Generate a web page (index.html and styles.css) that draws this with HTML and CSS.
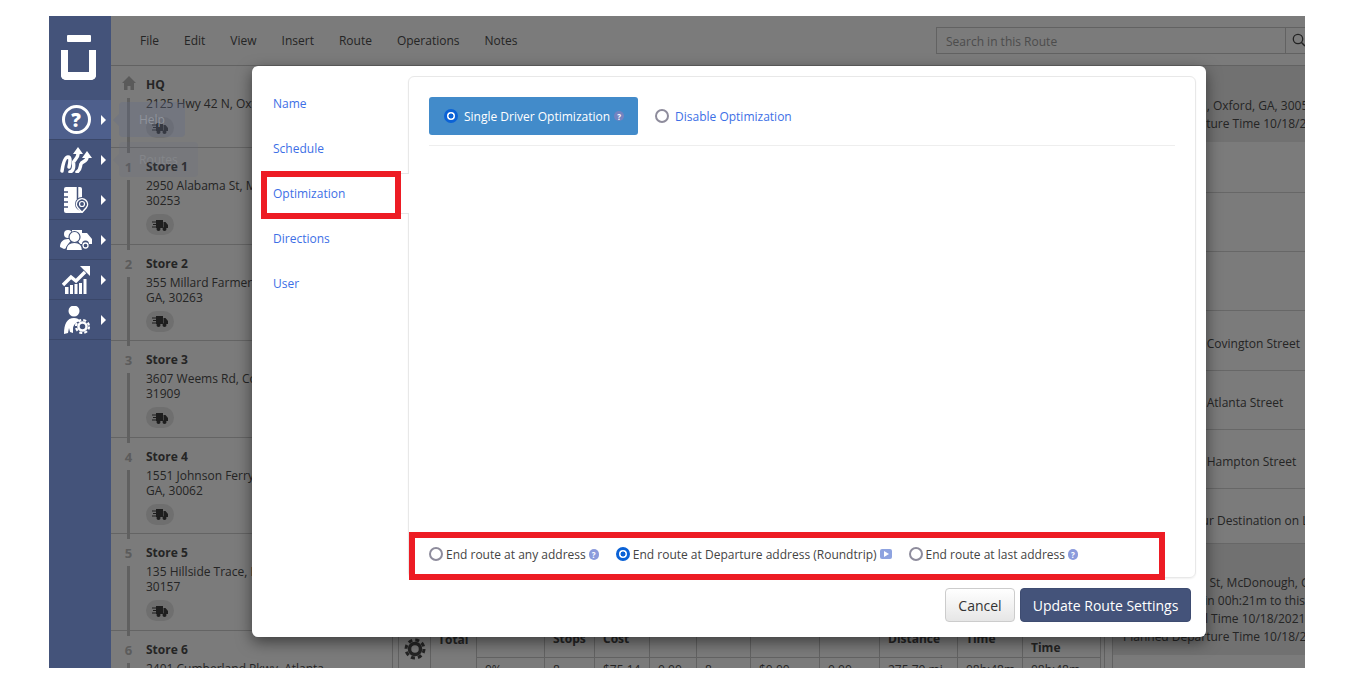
FILE: index.html
```html
<!DOCTYPE html>
<html lang="en">
<head>
    <meta charset="UTF-8">
    <title>Route Settings</title>
    <link rel="stylesheet" href="styles.css">
</head>
<body>

<div class="app">
    <nav class="sidebar">
        <div class="logo">
            <span class="logo-bar"></span>
            <span class="logo-cup"></span>
        </div>
        <a class="side-item active">
            <span class="side-icon"><span class="help-ring">?</span></span>
            <span class="side-arrow"></span>
        </a>
        <a class="side-item">
            <span class="side-icon">
                <svg width="32" height="26" viewBox="0 0 32 26">
                    <g fill="none" stroke="#fff" stroke-width="3.500" stroke-linecap="round">
                        <path d="M2 24C3 17 5 10 8 10c3 0 2 6 1 10"/>
                        <path d="M10 25c3-1 4-5 3.500-9-.3-3 4.500-4 4.500-9"/>
                        <path d="M17 25c4-2 3-6 4-8 1-3 6-2 6-7"/>
                    </g>
                    <path fill="#fff" d="M18 0l5 7H13zM27 4l5 7H22z"/>
                </svg>
            </span>
            <span class="side-arrow"></span>
        </a>
        <a class="side-item">
            <span class="side-icon">
                <svg width="28" height="26" viewBox="0 0 28 26">
                    <path fill="#fff" d="M4 0h14a2 2 0 0 1 2 2v22a2 2 0 0 1-2 2H4a2 2 0 0 1-2-2V2a2 2 0 0 1 2-2z"/>
                    <path fill="none" stroke="#44537a" stroke-width="1.500" d="M1 5h5M1 10h5M1 15h5M1 20h5M15.500 0v12"/>
                    <circle cx="20" cy="17" r="7" fill="#44537a"/>
                    <path fill="none" stroke="#fff" stroke-width="1.500" d="M20 25.500l-4.200-4.700a5.500 5.500 0 1 1 8.400 0z"/>
                    <circle cx="20" cy="17" r="2.500" fill="none" stroke="#fff" stroke-width="1.200"/>
                </svg>
            </span>
            <span class="side-arrow"></span>
        </a>
        <a class="side-item">
            <span class="side-icon">
                <svg width="34" height="22" viewBox="0 0 34 22">
                    <path fill="#fff" d="M13 1h10v3h5l5 6v5h-3a3.500 3.500 0 0 0-7 0h-2l-4-6-4-2z"/>
                    <circle cx="26.500" cy="16.500" r="2.500" fill="none" stroke="#fff" stroke-width="1.300"/>
                    <circle cx="9" cy="5" r="4" fill="#fff"/>
                    <path fill="#fff" d="M1 18c0-5 3-8 8-8 2 0 3 .5 4 1-3 2-5 5-5 8l-3 1z"/>
                    <circle cx="15.500" cy="8" r="5.500" fill="#fff" stroke="#44537a" stroke-width="1.200"/>
                    <path fill="#fff" stroke="#44537a" stroke-width="1.200" d="M7 21.500c0-5 3.500-8 8.500-8s8 3 8 8z"/>
                </svg>
            </span>
            <span class="side-arrow"></span>
        </a>
        <a class="side-item">
            <span class="side-icon">
                <svg width="28" height="28" viewBox="0 0 28 28">
                    <path fill="#fff" d="M8 19h3v9H8zM12.500 18h3v10h-3zM17 17h3v11h-3zM21.500 13h3v15h-3zM3 21h3.500v7H3z"/>
                    <path fill="none" stroke="#fff" stroke-width="3.500" d="M1 19l8-8 5 4 9-9"/>
                    <path fill="#fff" d="M18 0h10v10z"/>
                </svg>
            </span>
            <span class="side-arrow"></span>
        </a>
        <a class="side-item">
            <span class="side-icon">
                <svg width="28" height="28" viewBox="0 0 28 28">
                    <circle cx="12" cy="5" r="5.500" fill="#fff"/>
                    <path fill="#fff" d="M2 28c0-10 3-16 10-16 3 0 5 1 6 3-4 1-7 4-7 8v4l-3-1-1-4-1 5z"/>
                    <circle cx="20.500" cy="20.500" r="4" fill="none" stroke="#fff" stroke-width="2.500"/>
                    <circle cx="20.500" cy="20.500" r="6.500" fill="none" stroke="#fff" stroke-width="2.200" stroke-dasharray="3 2.100"/>
                </svg>
            </span>
            <span class="side-arrow"></span>
        </a>
    </nav>

    <div class="main">
        <header class="topbar">
            <div class="menu">
                <a>File</a>
                <a>Edit</a>
                <a>View</a>
                <a>Insert</a>
                <a>Route</a>
                <a>Operations</a>
                <a>Notes</a>
            </div>
            <div class="search">
                <span class="search-input">Search in this Route</span>
                <span class="search-btn">
                    <svg width="14" height="14" viewBox="0 0 14 14">
                        <circle cx="6" cy="6" r="4.700" fill="none" stroke="#444" stroke-width="1.300"/>
                        <path d="M9.500 9.500L13 13" stroke="#444" stroke-width="1.500"/>
                    </svg>
                </span>
            </div>
        </header>

        <div class="workspace">
            <section class="stops">
                <div class="stop">
                    <span class="stop-mark">
                        <svg width="14" height="14" viewBox="0 0 14 14"><path fill="#b4b4b4" d="M7 0l7 7h-2v7H8.500v-4h-3v4H2V7H0z"/></svg>
                    </span>
                    <h4>HQ</h4>
                    <p>2125 Hwy 42 N, Oxford, GA, 30054</p>
                    <span class="truck-pill"><svg class="truck" viewBox="0 0 16 12"><use href="#truck"/></svg></span>
                </div>
                <div class="stop">
                    <span class="stop-mark">1</span>
                    <h4>Store 1</h4>
                    <p>2950 Alabama St, McDonough, GA,<br>30253</p>
                    <span class="truck-pill"><svg class="truck" viewBox="0 0 16 12"><use href="#truck"/></svg></span>
                </div>
                <div class="stop">
                    <span class="stop-mark">2</span>
                    <h4>Store 2</h4>
                    <p>355 Millard Farmer Rd, Newnan,<br>GA, 30263</p>
                    <span class="truck-pill"><svg class="truck" viewBox="0 0 16 12"><use href="#truck"/></svg></span>
                </div>
                <div class="stop">
                    <span class="stop-mark">3</span>
                    <h4>Store 3</h4>
                    <p>3607 Weems Rd, Columbus, GA,<br>31909</p>
                    <span class="truck-pill"><svg class="truck" viewBox="0 0 16 12"><use href="#truck"/></svg></span>
                </div>
                <div class="stop">
                    <span class="stop-mark">4</span>
                    <h4>Store 4</h4>
                    <p>1551 Johnson Ferry Rd, Marietta,<br>GA, 30062</p>
                    <span class="truck-pill"><svg class="truck" viewBox="0 0 16 12"><use href="#truck"/></svg></span>
                </div>
                <div class="stop">
                    <span class="stop-mark">5</span>
                    <h4>Store 5</h4>
                    <p>135 Hillside Trace, Dallas, GA,<br>30157</p>
                    <span class="truck-pill"><svg class="truck" viewBox="0 0 16 12"><use href="#truck"/></svg></span>
                </div>
                <div class="stop">
                    <span class="stop-mark">6</span>
                    <h4>Store 6</h4>
                    <p>2401 Cumberland Pkwy, Atlanta,<br>GA, 30339</p>
                </div>
            </section>

            <section class="center">
                <div class="center-inner">
                    <div class="map"></div>
                    <table class="totals">
                        <colgroup>
                            <col class="c32"><col class="c46"><col class="c68"><col class="c50">
                            <col class="c55"><col class="c47"><col class="c54"><col class="c69">
                            <col class="c60"><col class="c78"><col class="c65"><col class="c78">
                        </colgroup>
                        <tr class="head">
                            <th rowspan="2" class="gear-cell">
                                <svg width="22" height="22" viewBox="0 0 22 22">
                                    <circle cx="11" cy="11" r="5.500" fill="none" stroke="#4a4a4a" stroke-width="3.500"/>
                                    <circle cx="11" cy="11" r="9" fill="none" stroke="#4a4a4a" stroke-width="3" stroke-dasharray="4 3.070"/>
                                </svg>
                            </th>
                            <th rowspan="2" class="total-cell">Total</th>
                            <th></th>
                            <th>Stops</th>
                            <th>Cost</th>
                            <th></th>
                            <th></th>
                            <th></th>
                            <th></th>
                            <th>Distance</th>
                            <th>Time</th>
                            <th class="low">Time</th>
                        </tr>
                        <tr>
                            <td>0%</td>
                            <td>8</td>
                            <td>$75.14</td>
                            <td>0.00</td>
                            <td>8</td>
                            <td>$0.00</td>
                            <td>0.00</td>
                            <td>275.70 mi</td>
                            <td>08h:48m</td>
                            <td>08h:48m</td>
                        </tr>
                    </table>
                </div>
            </section>

            <section class="directions">
                <div class="dir-stop first">
                    <p>2125 Hwy 42 N, Oxford, GA, 30054</p>
                    <p>Planned Departure Time 10/18/2021</p>
                </div>
                <div class="dir-row short">Head west</div>
                <div class="dir-row">Turn left</div>
                <div class="dir-row">Turn right</div>
                <div class="dir-row">Turn right onto Covington Street</div>
                <div class="dir-row">Turn right onto Atlanta Street</div>
                <div class="dir-row">Turn right onto Hampton Street</div>
                <div class="dir-row last">Continue to Your Destination on Left</div>
                <div class="dir-stop">
                    <p>1690 Hampton St, McDonough, GA, 30253</p>
                    <p>You will arrive in 00h:21m to this stop</p>
                    <p>Planned Arrival Time 10/18/2021</p>
                    <p>Planned Departure Time 10/18/2021</p>
                </div>
            </section>
        </div>
    </div>

    <div class="backdrop"></div>

    <div class="tip tip-help">Help</div>
    <div class="tip tip-routes">Routes</div>

    <div class="modal">
        <div class="modal-body">
            <ul class="tabs">
                <li><a>Name</a></li>
                <li><a>Schedule</a></li>
                <li class="active"><a>Optimization</a></li>
                <li><a>Directions</a></li>
                <li><a>User</a></li>
            </ul>
            <div class="panel">
                <div class="opt-row">
                    <label class="opt-btn selected">
                        <input type="radio" name="opt" checked>
                        <span>Single Driver Optimization</span>
                        <span class="hint dark">?</span>
                    </label>
                    <label class="opt-btn">
                        <input type="radio" name="opt">
                        <span>Disable Optimization</span>
                    </label>
                </div>
                <hr>
                <div class="end-row">
                    <label class="end-opt">
                        <input type="radio" name="end">
                        <span>End route at any address</span>
                        <span class="hint">?</span>
                    </label>
                    <label class="end-opt">
                        <input type="radio" name="end" checked>
                        <span>End route at Departure address (Roundtrip)</span>
                        <span class="play"></span>
                    </label>
                    <label class="end-opt">
                        <input type="radio" name="end">
                        <span>End route at last address</span>
                        <span class="hint">?</span>
                    </label>
                </div>
            </div>
        </div>
        <div class="modal-footer">
            <button class="btn btn-cancel">Cancel</button>
            <button class="btn btn-update">Update Route Settings</button>
        </div>
        <div class="callout callout-tab"></div>
        <div class="callout callout-end"></div>
    </div>
</div>

<svg class="defs" width="0" height="0">
    <symbol id="truck" viewBox="0 0 16 12">
        <path fill="#3c3c3c" d="M4 1h7v8H4zM11.500 3h2l2.500 3v3h-4.500z"/>
        <circle cx="6.500" cy="10" r="2" fill="#3c3c3c"/>
        <circle cx="12.500" cy="10" r="2" fill="#3c3c3c"/>
        <path stroke="#3c3c3c" stroke-width="1.200" d="M0 3h5M1 5.500h5M0 8h5"/>
    </symbol>
</svg>

</body>
</html>
```

FILE: styles.css
```css
* {
    box-sizing: border-box;
}
body {
    margin: 0;
    background-color: #fff;
    font-family: "Open Sans", Arial, sans-serif;
    font-size: 12px;
    color: #4a4a4a;
}
p, h4, ul {
    margin: 0;
    padding: 0;
}
.defs {
    position: absolute;
}
.app {
    display: flex;
    position: relative;
    width: 1256px;
    height: 652px;
    margin: 16px 0 0 49px;
    overflow: hidden;
    background-color: #f6f6f6;
}

/* sidebar */
.sidebar {
    position: relative;
    z-index: 3;
    flex: 0 0 62px;
    background-color: #44537a;
}
.logo {
    display: flex;
    flex-direction: column;
    align-items: center;
    height: 84px;
    padding: 19px 3px 0 0;
}
.logo-bar {
    width: 24px;
    height: 7px;
    border-radius: 1px;
    background-color: #fff;
}
.logo-cup {
    width: 35px;
    height: 30px;
    margin-top: 8px;
    border: 7px solid #fff;
    border-top: none;
    border-bottom-width: 8px;
    border-radius: 0 0 5px 5px;
}
.side-item {
    display: flex;
    align-items: center;
    height: 40px;
    padding-left: 10px;
    border-bottom: 1px solid #3a4769;
}
.side-item.active {
    background-color: #4e5f8c;
}
.side-icon {
    display: flex;
    justify-content: center;
    align-items: center;
    width: 34px;
}
.help-ring {
    display: flex;
    justify-content: center;
    align-items: center;
    width: 29px;
    height: 29px;
    border: 3.500px solid #fff;
    border-radius: 50%;
    color: #fff;
    font-size: 19px;
    font-weight: 800;
}
.side-arrow {
    width: 0;
    height: 0;
    margin-left: 8px;
    border-top: 5px solid transparent;
    border-bottom: 5px solid transparent;
    border-left: 5px solid #fff;
}

/* page under the dialog */
.main {
    flex: 1;
    display: flex;
    flex-direction: column;
    min-width: 0;
}
.topbar {
    flex: 0 0 50px;
    display: flex;
    align-items: center;
    justify-content: space-between;
    padding-left: 29px;
    border-bottom: 1px solid #c4c4c4;
}
.menu {
    display: flex;
    gap: 25px;
}
.search {
    display: flex;
    flex: 0 0 400px;
    height: 27px;
    margin-right: -31px;
    border: 1px solid #c4c4c4;
}
.search-input {
    flex: 1;
    padding: 5px 9px;
    color: #999;
}
.search-btn {
    width: 50px;
    padding: 5px 6px;
    border-left: 1px solid #c4c4c4;
}
.workspace {
    flex: 1;
    display: flex;
    min-height: 0;
}
.stops {
    flex: 0 0 274px;
}
.stop {
    position: relative;
    height: 96.600px;
    padding: 11px 0 0 35px;
    border-bottom: 1px solid #c8c8c8;
    white-space: nowrap;
}
.stop:first-child {
    height: 82px;
}
.stop h4 {
    font-size: 12px;
    line-height: 16px;
    font-weight: 700;
    margin-bottom: 3px;
}
.stop p {
    line-height: 15px;
}
.stop-mark {
    position: absolute;
    top: 10px;
    left: 0;
    width: 35px;
    text-align: center;
    font-size: 13px;
    font-weight: 700;
    color: #b8b8b8;
}
.stop::before {
    content: "";
    position: absolute;
    top: 32px;
    bottom: -6px;
    left: 16px;
    width: 3px;
    background-color: #c0c0c0;
}
.stop:last-child::before {
    bottom: 0;
}
.truck-pill {
    display: flex;
    justify-content: center;
    align-items: center;
    width: 28px;
    height: 21px;
    margin-top: 6px;
    border-radius: 11px;
    background-color: #dedede;
}
.truck {
    width: 16px;
    height: 12px;
}
.center {
    flex: 1;
    min-width: 0;
    padding: 0 7px;
}
.center-inner {
    display: flex;
    flex-direction: column;
    height: 100%;
    padding-left: 5px;
    border-left: 1px solid #c4c4c4;
    border-right: 1px solid #c4c4c4;
}
.map {
    flex: 0 0 551px;
}
.totals {
    table-layout: fixed;
    width: 702px;
    border-collapse: collapse;
    font-size: 12px;
}
.totals th, .totals td {
    border: 1px solid #c4c4c4;
    padding: 0 8px;
    text-align: left;
}
.totals .head {
    height: 40px;
}
.totals th {
    vertical-align: bottom;
    padding-bottom: 10px;
    line-height: 16px;
}
.totals .low {
    padding-bottom: 1px;
}
.totals .gear-cell {
    vertical-align: top;
    padding: 20px 0 0 5px;
}
.totals .total-cell {
    vertical-align: top;
    padding: 14px 0 0 7px;
}
.totals td {
    vertical-align: top;
    padding-top: 3px;
    height: 30px;
    white-space: nowrap;
}
.c32 { width: 32px; }
.c46 { width: 46px; }
.c68 { width: 68px; }
.c50 { width: 50px; }
.c55 { width: 55px; }
.c47 { width: 47px; }
.c54 { width: 54px; }
.c69 { width: 69px; }
.c60 { width: 60px; }
.c78 { width: 78px; }
.c65 { width: 65px; }
.directions {
    flex: 0 0 193px;
    min-width: 0;
    border-left: 1px solid #c4c4c4;
    white-space: nowrap;
}
.directions p {
    line-height: 18px;
}
.dir-stop {
    padding: 30px 0 0 10px;
    height: 111px;
    background-color: #e2e2e2;
}
.dir-stop.first {
    height: 76px;
    padding-top: 31px;
}
.dir-row {
    display: flex;
    align-items: center;
    height: 59.200px;
    padding: 6px 0 0 6px;
    border-bottom: 1px solid #cfcfcf;
}
.dir-row.short {
    height: 51px;
}
.dir-row.last {
    height: 55px;
    padding-top: 10px;
}

/* overlay */
.backdrop {
    position: absolute;
    top: 0;
    right: 0;
    bottom: 0;
    left: 62px;
    background-color: rgba(0, 0, 0, 0.5);
}
.tip {
    position: absolute;
    left: 70px;
    height: 35px;
    padding: 9px 20px;
    border-radius: 4px;
    background-color: rgba(100, 110, 135, 0.35);
    color: #8f939c;
    font-size: 12px;
}
.tip::before {
    content: "";
    position: absolute;
    top: 12px;
    left: -6px;
    border-top: 6px solid transparent;
    border-bottom: 6px solid transparent;
    border-right: 6px solid rgba(100, 110, 135, 0.35);
}
.tip-help {
    top: 86px;
}
.tip-routes {
    top: 126px;
    opacity: 0.45;
}

/* dialog */
.modal {
    position: absolute;
    top: 50px;
    left: 203px;
    z-index: 4;
    width: 954px;
    height: 571px;
    padding: 10px 10px 15px 0;
    border-radius: 6px;
    background-color: #fff;
    box-shadow: 0 5px 15px rgba(0, 0, 0, 0.5);
}
.modal-body {
    display: flex;
    height: 502px;
}
.tabs {
    flex: 0 0 156px;
    position: relative;
    z-index: 1;
    padding-top: 7px;
    list-style: none;
}
.tabs li {
    display: flex;
    align-items: center;
    height: 41px;
    margin: 0 -1px 4px 9px;
    padding-left: 12px;
    border-top: 1px solid transparent;
    border-bottom: 1px solid transparent;
}
.tabs li.active {
    border-color: #e6e6e6;
    background-color: #fff;
}
.tabs a, .opt-btn {
    color: #3d6fe6;
}
.panel {
    flex: 1;
    display: flex;
    flex-direction: column;
    padding: 20px 20px 13px;
    border: 1px solid #e8e8e8;
    border-radius: 6px;
    box-shadow: 0 1px 2px rgba(0, 0, 0, 0.06);
}
.opt-row {
    display: flex;
    gap: 17px;
}
.opt-btn {
    display: flex;
    align-items: center;
    height: 38px;
}
.opt-btn.selected {
    padding: 0 14px 0 15px;
    border-radius: 3px;
    background-color: #428bca;
    color: #fff;
}
.opt-btn input, .end-opt input {
    appearance: none;
    flex: 0 0 14px;
    width: 14px;
    height: 14px;
    margin: 0 6px 0 0;
    border: 2px solid #8e8c9c;
    border-radius: 50%;
    background-color: #fff;
}
.opt-btn input:checked, .end-opt input:checked {
    border: 3px solid #0b62d6;
    background: radial-gradient(circle, #0b62d6 0, #0b62d6 2.200px, #fff 2.800px);
}
.panel hr {
    width: 100%;
    margin: 10px 0 0;
    border: none;
    border-top: 1px solid #eee;
}
.end-row {
    display: flex;
    gap: 17px;
    margin-top: auto;
    height: 20px;
}
.end-opt {
    display: flex;
    align-items: center;
    color: #444;
}
.end-opt input {
    margin-right: 3px;
}
.hint {
    display: inline-flex;
    justify-content: center;
    align-items: center;
    width: 10px;
    height: 11px;
    margin-left: 3px;
    border-radius: 5px;
    background-color: #8b9bdc;
    color: #fff;
    font-size: 8px;
    font-weight: 700;
}
.hint.dark {
    height: 10px;
    margin-left: 4px;
    background-color: #7483c0;
}
.play {
    position: relative;
    width: 12px;
    height: 10px;
    margin-left: 3px;
    border-radius: 2px;
    background-color: #8ea3e0;
}
.play::after {
    content: "";
    position: absolute;
    top: 2px;
    left: 4px;
    border-top: 3px solid transparent;
    border-bottom: 3px solid transparent;
    border-left: 5px solid #fff;
}
.modal-footer {
    display: flex;
    justify-content: flex-end;
    gap: 5px;
    margin-top: 10px;
    padding-right: 5px;
}
.btn {
    height: 34px;
    border-radius: 4px;
    font-family: inherit;
    font-size: 14px;
}
.btn-cancel {
    width: 70px;
    border: 1px solid #ccc;
    background: linear-gradient(#fff, #e6e6e6);
    color: #333;
}
.btn-update {
    width: 171px;
    border: 1px solid #3e4c71;
    background-color: #44537a;
    color: #fff;
}
.callout {
    position: absolute;
    z-index: 2;
    height: 48px;
    border: 6px solid #ed1c24;
}
.callout-tab {
    top: 105px;
    left: 9px;
    width: 140px;
}
.callout-end {
    top: 466px;
    left: 157px;
    width: 756px;
}
```
